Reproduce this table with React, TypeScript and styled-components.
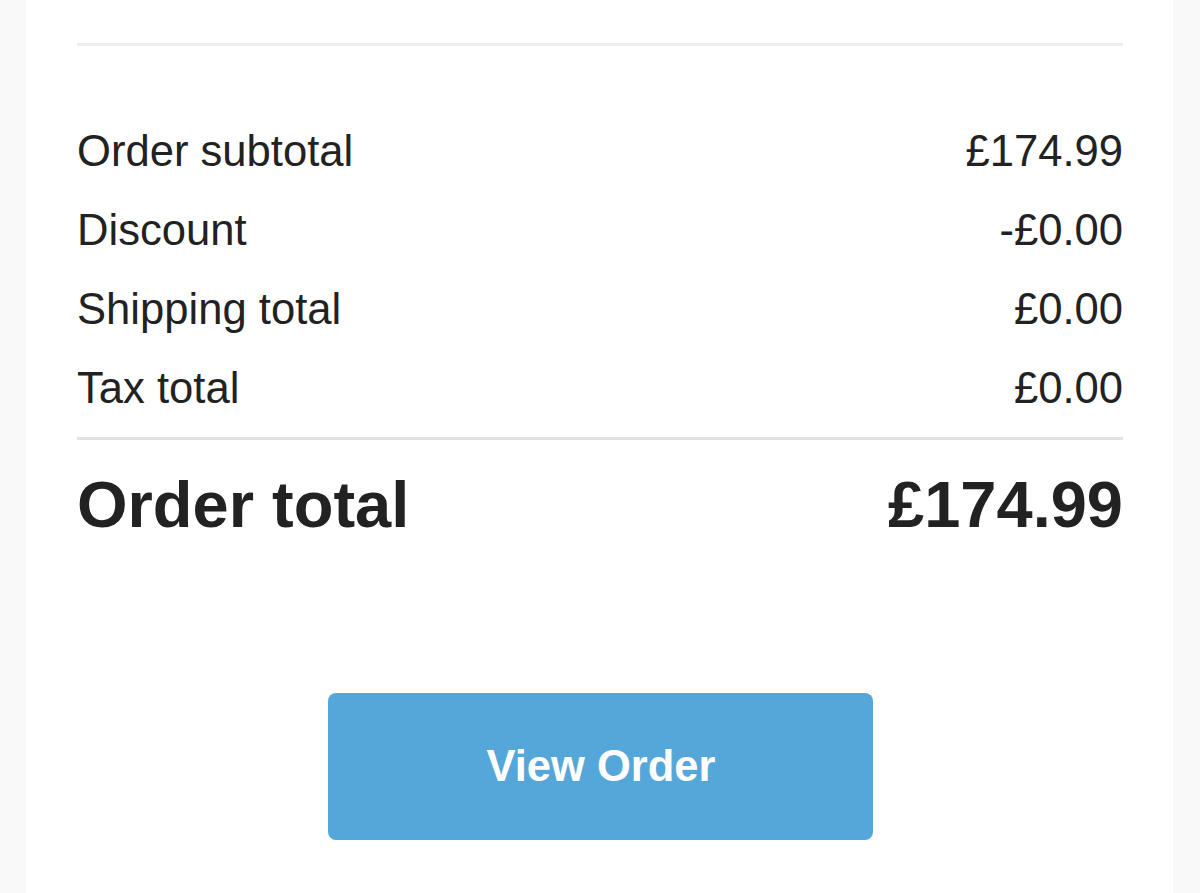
import React from "react";
import styled, { createGlobalStyle } from "styled-components";

const GlobalStyle = createGlobalStyle`
  html, body {
    margin: 0;
    padding: 0;
    background: #f9f9f9;
  }
  body {
    font-family: "Liberation Sans", Arial, Helvetica, sans-serif;
    color: #222222;
  }
`;

const Page = styled.div`
  padding: 0 27px 0 26px;
  height: 893px;
  overflow: hidden;
`;

const Card = styled.div`
  background: #ffffff;
  min-height: 893px;
  padding: 43px 50px 0 51px;
  box-sizing: border-box;
  display: flex;
  flex-direction: column;
`;

const Rule = styled.div<{ $tone: string; $gap: number }>`
  height: 3px;
  background: ${(p) => p.$tone};
  margin-top: ${(p) => p.$gap}px;
`;

const Summary = styled.div`
  margin-top: 66px;
  display: flex;
  flex-direction: column;
`;

const Row = styled.div`
  display: flex;
  justify-content: space-between;
  align-items: baseline;
  font-size: 43.6px;
  line-height: 79px;
  color: #222222;
`;

const TotalRow = styled.div`
  margin-top: 27px;
  display: flex;
  justify-content: space-between;
  align-items: baseline;
  font-size: 65px;
  font-weight: 700;
  line-height: 75px;
  color: #222222;
`;

const ButtonWrap = styled.div`
  margin-top: 151px;
  display: flex;
  justify-content: center;
`;

const ViewButton = styled.a`
  width: 545px;
  height: 147px;
  border-radius: 8px;
  background: #56a7d9;
  color: #ffffff;
  font-size: 43.5px;
  font-weight: 700;
  display: flex;
  align-items: center;
  justify-content: center;
  text-decoration: none;
  padding-left: 2px;
  box-sizing: border-box;
`;

const lines: [string, string][] = [
  ["Order subtotal", "£174.99"],
  ["Discount", "-£0.00"],
  ["Shipping total", "£0.00"],
  ["Tax total", "£0.00"],
];

export default function App() {
  return (
    <>
      <GlobalStyle />
      <Page>
        <Card>
          <Rule $tone="#eeeeee" $gap={0} />
          <Summary>
            {lines.map(([label, value]) => (
              <Row key={label}>
                <span>{label}</span>
                <span>{value}</span>
              </Row>
            ))}
          </Summary>
          <Rule $tone="#e1e1e1" $gap={9} />
          <TotalRow>
            <span>Order total</span>
            <span>£174.99</span>
          </TotalRow>
          <ButtonWrap>
            <ViewButton href="#">View Order</ViewButton>
          </ButtonWrap>
        </Card>
      </Page>
    </>
  );
}
